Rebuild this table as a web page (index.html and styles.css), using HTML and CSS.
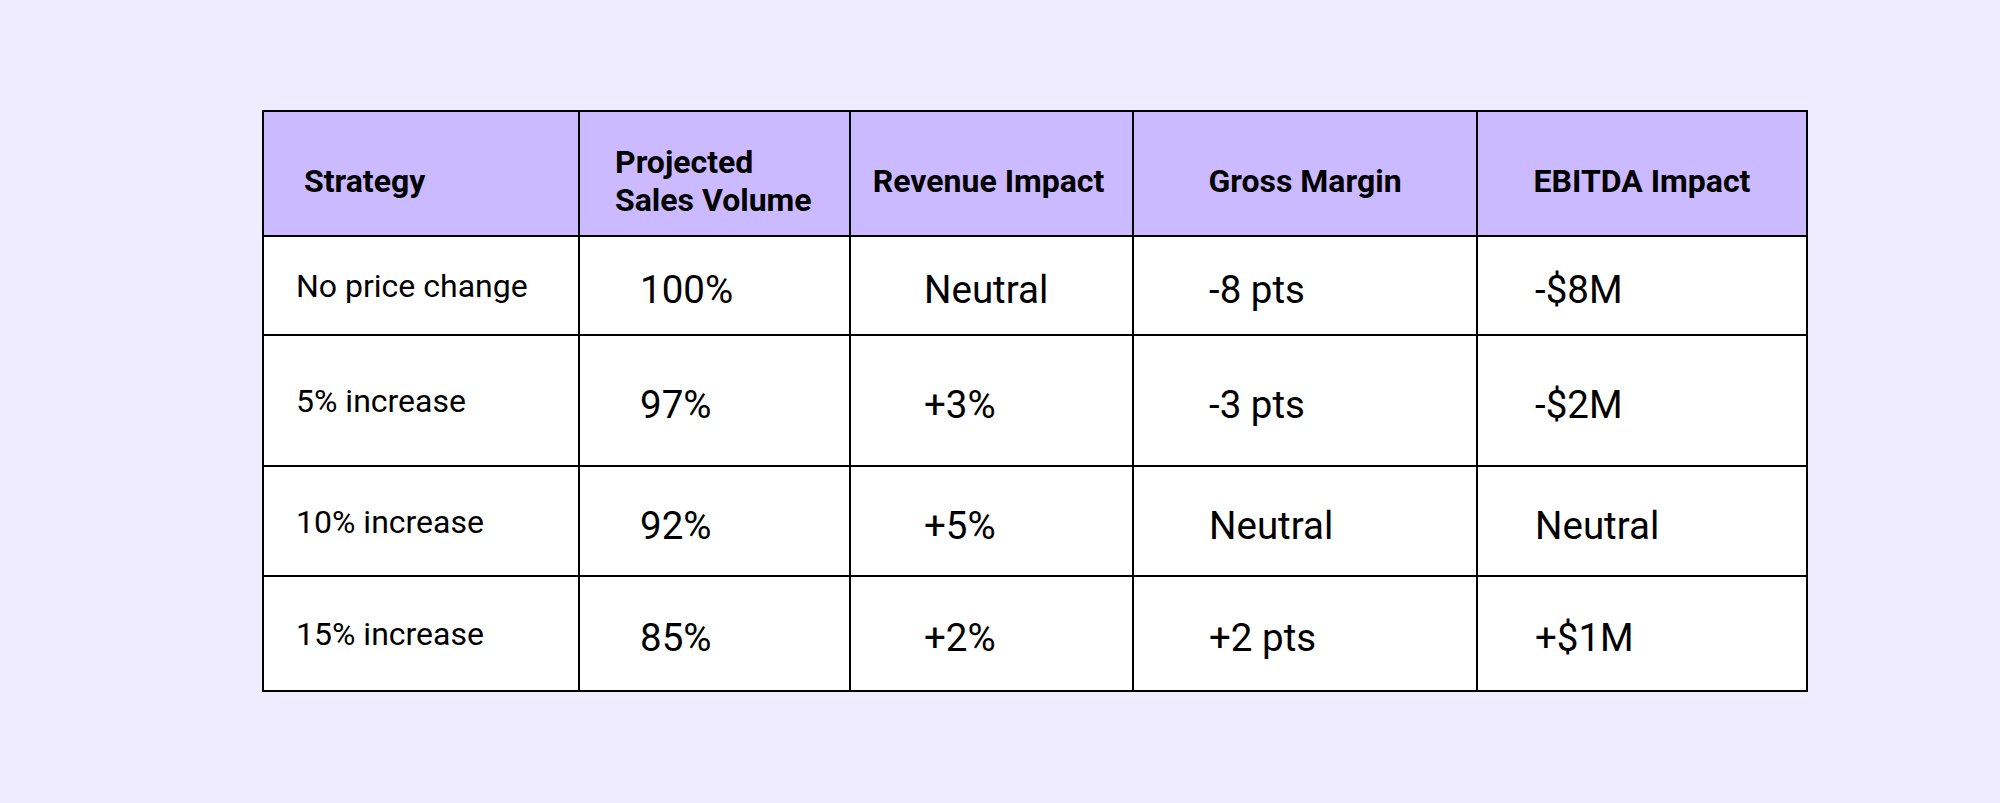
FILE: index.html
```html
<!DOCTYPE html>
<html lang="en">
<head>
<meta charset="utf-8">
<title>Pricing strategy table</title>
<link rel="stylesheet" href="styles.css">
</head>
<body>
<main class="page">
  <div class="table">
    <div class="cell head c1">Strategy</div>
    <div class="cell head c2">Projected<br>Sales Volume</div>
    <div class="cell head center c3">Revenue Impact</div>
    <div class="cell head center">Gross Margin</div>
    <div class="cell head center">EBITDA Impact</div>

    <div class="cell label c1">No price change</div>
    <div class="cell value c2">100%</div>
    <div class="cell value c3">Neutral</div>
    <div class="cell value c4">-8 pts</div>
    <div class="cell value c5">-$8M</div>

    <div class="cell label c1">5% increase</div>
    <div class="cell value c2">97%</div>
    <div class="cell value c3">+3%</div>
    <div class="cell value c4">-3 pts</div>
    <div class="cell value c5">-$2M</div>

    <div class="cell label c1">10% increase</div>
    <div class="cell value c2">92%</div>
    <div class="cell value c3">+5%</div>
    <div class="cell value c4">Neutral</div>
    <div class="cell value c5">Neutral</div>

    <div class="cell label c1">15% increase</div>
    <div class="cell value c2">85%</div>
    <div class="cell value c3">+2%</div>
    <div class="cell value c4">+2 pts</div>
    <div class="cell value c5">+$1M</div>
  </div>
</main>
</body>
</html>
```

FILE: styles.css
```css
html, body {
  margin: 0;
  padding: 0;
  background: #f0ecff;
}

body {
  font-family: Roboto, "Liberation Sans", sans-serif;
  color: #000;
}

.page {
  padding: 110px 0 0 262px;
}

.table {
  display: grid;
  grid-template-columns: 314px 269px 281px 342px 328px;
  grid-template-rows: 123px 97px 129px 108px 113px;
  gap: 2px;
  padding: 2px;
  background: #000;
  width: max-content;
}

.cell {
  display: flex;
  align-items: center;
  background: #fff;
  white-space: nowrap;
}

.head {
  background: #cbbaff;
  font-weight: 700;
  font-size: 32px;
  line-height: 38px;
  padding-top: 14px;
}

.head.c1 { padding-left: 40px; }
.head.c2 { padding-left: 35px; }
.head.center { justify-content: center; }
.head.c3 { padding-right: 6px; }

.label {
  font-size: 32px;
  padding-left: 32px;
  padding-top: 1px;
}

.value {
  font-size: 38.5px;
  padding-top: 8px;
}

.value.c2 { padding-left: 60px; }
.value.c3 { padding-left: 73px; }
.value.c4 { padding-left: 75px; }
.value.c5 { padding-left: 57px; }
```
